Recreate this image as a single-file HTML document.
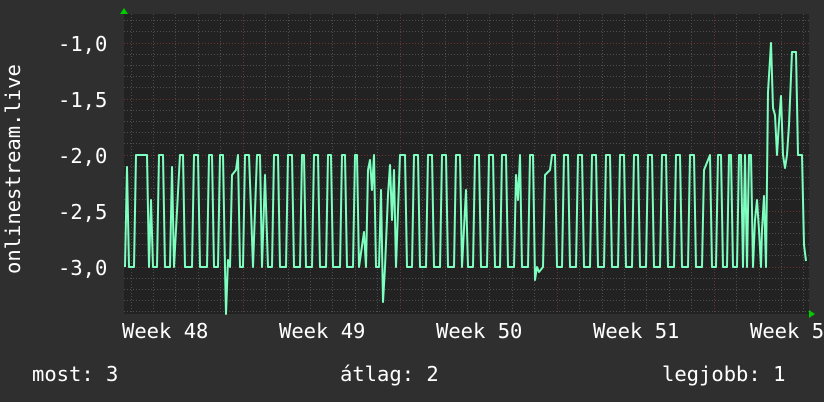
<!DOCTYPE html>
<html><head><meta charset="utf-8"><style>
body{margin:0;background:#2f2f2f;width:824px;height:402px;overflow:hidden}
svg{display:block}
text{font-family:"DejaVu Sans Mono","Liberation Mono",monospace;fill:#fff;font-size:20.5px}
</style></head><body>
<svg width="824" height="402" xmlns="http://www.w3.org/2000/svg">
<rect width="824" height="402" fill="#2f2f2f"/>
<rect x="124" y="14" width="685" height="300" fill="#222"/>
<path stroke="#4e4e4e" stroke-width="1" stroke-dasharray="1,2" fill="none" d="M124,20.5H809M124,31.5H809M124,54.5H809M124,65.5H809M124,76.5H809M124,87.5H809M124,110.5H809M124,121.5H809M124,132.5H809M124,143.5H809M124,166.5H809M124,177.5H809M124,188.5H809M124,199.5H809M124,222.5H809M124,233.5H809M124,244.5H809M124,255.5H809M124,278.5H809M124,289.5H809M124,300.5H809M124,311.5H809
M131.5,14V314M153.5,14V314M175.5,14V314M198.5,14V314M220.5,14V314M265.5,14V314M288.5,14V314M310.5,14V314M332.5,14V314M355.5,14V314M377.5,14V314M422.5,14V314M445.5,14V314M467.5,14V314M489.5,14V314M512.5,14V314M534.5,14V314M579.5,14V314M602.5,14V314M624.5,14V314M646.5,14V314M669.5,14V314M691.5,14V314M736.5,14V314M759.5,14V314M781.5,14V314M803.5,14V314"/>
<path stroke="#6e3434" stroke-width="1" stroke-dasharray="1,2" fill="none" d="M124,43.5H809M124,99.5H809M124,155.5H809M124,211.5H809M124,267.5H809M243.5,14V314M400.5,14V314M557.5,14V314M714.5,14V314"/>
<polygon points="120,14 128,14 124,8" fill="#0c0"/>
<polygon points="809,310 809,318 815,314" fill="#0c0"/>
<path fill="none" stroke="#7dffc0" stroke-width="2" stroke-linejoin="round" d="M125,267 L127,167 L129,267 L134,267 L136,155 L147,155 L149,267 L151,200 L153,267 L157,267 L159,155 L163,155 L165,267 L170,267 L172,167 L174,267 L180,155 L183,155 L185,267 L192,267 L194,155 L198,155 L200,267 L207,267 L209,155 L212,155 L214,267 L218,267 L220,155 L223,155 L225,267 L226,314 L228,260 L230,267 L232,175 L236,170 L238,155 L240,267 L243,267 L245,155 L249,155 L251,210 L253,267 L257,155 L260,155 L262,267 L265,175 L268,267 L272,267 L274,155 L278,155 L280,267 L286,267 L288,155 L292,155 L294,267 L300,267 L302,155 L304,155 L306,267 L312,267 L314,155 L318,155 L320,267 L326,267 L328,155 L331,155 L333,267 L340,267 L342,155 L345,155 L347,267 L353,267 L355,155 L357,155 L359,267 L364,232 L366,267 L368,170 L370,160 L372,190 L374,155 L376,267 L379,267 L381,190 L383,302 L385,267 L388,195 L390,165 L392,220 L394,170 L396,267 L400,155 L405,155 L407,267 L412,267 L414,155 L418,155 L420,267 L426,267 L428,155 L432,155 L434,267 L440,267 L442,155 L446,155 L448,267 L454,267 L456,155 L460,155 L462,267 L466,190 L468,267 L473,267 L475,155 L479,155 L481,267 L487,267 L489,155 L493,155 L495,267 L500,267 L502,155 L506,155 L508,267 L514,267 L516,175 L518,200 L520,155 L522,267 L528,267 L530,155 L533,155 L535,280 L537,267 L539,272 L543,267 L545,175 L550,170 L552,155 L555,155 L557,267 L562,267 L564,155 L568,155 L570,267 L576,267 L578,155 L582,155 L584,267 L590,267 L592,155 L596,155 L598,267 L604,267 L606,155 L610,155 L612,267 L618,267 L620,155 L624,155 L626,267 L632,267 L634,155 L638,155 L640,267 L646,267 L648,155 L652,155 L654,267 L660,267 L662,155 L666,155 L668,267 L674,267 L676,155 L680,155 L682,267 L688,267 L690,155 L694,155 L696,267 L702,267 L704,170 L708,160 L710,155 L712,267 L716,267 L718,155 L721,155 L723,267 L727,267 L729,155 L731,155 L733,267 L737,267 L739,155 L741,155 L743,267 L745,155 L747,267 L749,155 L751,155 L753,267 L755,220 L757,200 L759,230 L761,267 L762,230 L764,196 L766,267 L768,92 L771,43 L773,108 L775,115 L777,155 L779,122 L781,96 L783,155 L785,168 L787,155 L789,125 L792,52 L796,52 L798,155 L802,155 L804,245 L806,261"/>
<text x="58" y="51">-1,0</text>
<text x="58" y="107">-1,5</text>
<text x="58" y="163">-2,0</text>
<text x="58" y="219">-2,5</text>
<text x="58" y="275">-3,0</text>
<text transform="translate(20,274) rotate(-90)">onlinestream.live</text>
<text x="122" y="338">Week 48</text>
<text x="279" y="338">Week 49</text>
<text x="436" y="338">Week 50</text>
<text x="593" y="338">Week 51</text>
<text x="750" y="338">Week 5</text>
<text x="32" y="381">most: 3</text>
<text x="340" y="381">átlag: 2</text>
<text x="662" y="381">legjobb: 1</text>
</svg>
</body></html>
